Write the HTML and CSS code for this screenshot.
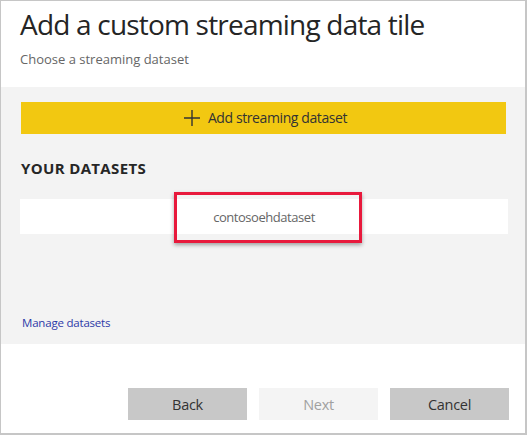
FILE: index.html
```html
<!DOCTYPE html>
<html>
<head>
<meta charset="utf-8">
<link rel="stylesheet" href="styles.css">
</head>
<body>
<div class="frame">
  <div class="header">
    <h1 class="title">Add a custom streaming data tile</h1>
    <p class="subtitle">Choose a streaming dataset</p>
  </div>
  <div class="panel">
    <button class="add-btn">
      <svg class="plus" width="16" height="16" viewBox="0 0 16 16"><path d="M8 0v16M0 8h16" stroke="#333" stroke-width="1.4" fill="none"/></svg>
      <span>Add streaming dataset</span>
    </button>
    <div class="section-label">YOUR DATASETS</div>
    <div class="dataset-row">
      <span class="dataset-name">contosoehdataset</span>
      <div class="highlight"></div>
    </div>
    <a class="manage" href="#">Manage datasets</a>
  </div>
  <div class="footer">
    <button class="btn">Back</button>
    <button class="btn disabled">Next</button>
    <button class="btn">Cancel</button>
  </div>
</div>
</body>
</html>
```

FILE: styles.css
```css
* { box-sizing: border-box; }
html, body { margin: 0; padding: 0; background: #fff; }
body { font-family: "Open Sans", "Noto Sans", sans-serif; color: #333; }

.frame {
  width: 527px;
  height: 435px;
  border-style: solid;
  border-color: #c6c6c6;
  border-width: 1px 2px 2px 1px;
  display: flex;
  flex-direction: column;
}

.header {
  height: 86px;
  padding: 0 19px;
}
.title {
  margin: 0;
  padding-top: 4px;
  font-weight: 400;
  font-size: 28px;
  line-height: 38px;
  letter-spacing: -0.8px;
  color: #252525;
}
.subtitle {
  margin: 7px 0 0;
  font-size: 13px;
  line-height: 18px;
  letter-spacing: 0;
  color: #666;
}

.panel {
  height: 257px;
  background: #f3f3f3;
  padding: 15px 19px 0 20px;
  display: flex;
  flex-direction: column;
}
.add-btn {
  height: 32px;
  border: none;
  background: #f2c811;
  display: flex;
  align-items: center;
  justify-content: center;
  gap: 8px;
  font-family: inherit;
  font-size: 14px;
  letter-spacing: -0.4px;
  color: #333;
  padding: 0 0 1px 4px;
}
.plus { display: block; }

.section-label {
  margin-top: 24px;
  font-weight: 700;
  font-size: 15px;
  line-height: 21px;
  letter-spacing: 0.35px;
  color: #262626;
}
.dataset-row {
  position: relative;
  margin: 20px -2px 0 -1px;
  height: 35px;
  background: #fff;
  display: flex;
  align-items: center;
  justify-content: center;
  padding-top: 1px;
}
.dataset-name {
  font-size: 13px;
  letter-spacing: -0.45px;
  color: #666;
}
.highlight {
  position: absolute;
  left: 154px;
  top: -7px;
  width: 188px;
  height: 51px;
  border: 3px solid #e8193c;
  box-shadow: 0 2px 4px rgba(0, 0, 0, 0.35);
}
.manage {
  margin-top: 81px;
  margin-left: 1px;
  font-size: 11.5px;
  letter-spacing: -0.2px;
  color: #2d3aa8;
  text-decoration: none;
}

.footer {
  flex: 1;
  display: flex;
  justify-content: flex-end;
  align-items: flex-start;
  gap: 12px;
  padding: 44px 16px 0 0;
}
.btn {
  width: 119px;
  height: 32px;
  border: none;
  background: #c8c8c8;
  font-family: inherit;
  font-size: 14.5px;
  letter-spacing: -0.3px;
  color: #333;
  padding: 0;
}
.btn.disabled {
  background: #f4f4f4;
  color: #a0a0a0;
}
```
